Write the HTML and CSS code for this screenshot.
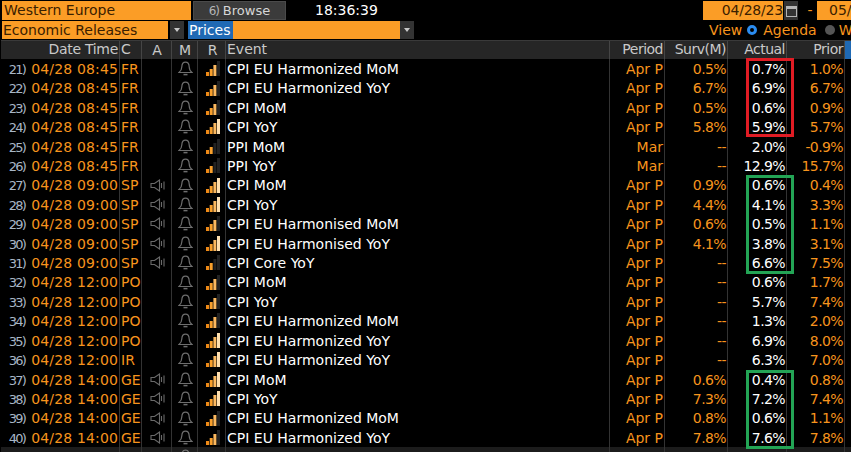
FILE: index.html
```html
<!DOCTYPE html>
<html lang="en">
<head>
<meta charset="utf-8">
<title>Economic Releases</title>
<link rel="stylesheet" href="styles.css">
</head>
<body>
<svg class="defs" width="0" height="0" aria-hidden="true">
  <symbol id="bell" viewBox="0 0 15 15"><path d="M1 11.5 C3.2 10 3.7 8.5 3.8 6 C3.9 3 5.2 1.2 7.5 1.2 C9.8 1.2 11.1 3 11.2 6 C11.3 8.5 11.8 10 14 11.5 Z" fill="none" stroke="#6e6e6e" stroke-width="1.2"/><path d="M5.5 13.6 H9.5" stroke="#6e6e6e" stroke-width="1.5"/></symbol>
  <symbol id="spk" viewBox="0 0 15 13"><path d="M1 4.5 H4.5 L9.5 1 V12 L4.5 8.5 H1 Z" fill="none" stroke="#6a6a6a" stroke-width="1.1"/><path d="M11.5 4 V9 M14 2.5 V10.5" stroke="#6a6a6a" stroke-width="1.1"/></symbol>
  <symbol id="sig2" viewBox="0 0 14 15"><rect y="11" width="3" height="4" fill="#ef8a17"/><rect x="3.7" y="8" width="3" height="7" fill="#f9a02c"/><rect x="7.4" y="4" width="3" height="11" fill="#222"/><rect x="11" width="3" height="15" fill="#222"/></symbol>
  <symbol id="sig3" viewBox="0 0 14 15"><rect y="11" width="3" height="4" fill="#ef8a17"/><rect x="3.7" y="8" width="3" height="7" fill="#f9a02c"/><rect x="7.4" y="4" width="3" height="11" fill="#fbb85f"/><rect x="11" width="3" height="15" fill="#222"/></symbol>
  <symbol id="sig4" viewBox="0 0 14 15"><rect y="11" width="3" height="4" fill="#ef8a17"/><rect x="3.7" y="8" width="3" height="7" fill="#f9a02c"/><rect x="7.4" y="4" width="3" height="11" fill="#fbb85f"/><rect x="11" width="3" height="15" fill="#ffdfae"/></symbol>
</svg>

<div class="bar bar-one">
  <div class="field field-region">Western Europe</div>
  <button class="browse"><span class="hot">6)</span> Browse</button>
  <div class="clock">18:36:39</div>
  <div class="dates">
    <div class="field field-date">04/28/23</div>
    <div class="cal"><svg width="11" height="12" viewBox="0 0 11 12"><rect x="0.5" y="1.5" width="10" height="10" fill="none" stroke="#b4b4b4"/><rect x="1" y="1" width="9" height="3" fill="#b4b4b4"/></svg></div>
    <span class="dash">-</span>
    <div class="field field-date2">05/</div>
  </div>
</div>
<div class="bar bar-two">
  <div class="field field-release">Economic Releases</div>
  <div class="arrow"></div>
  <div class="field field-prices"><span class="selected">Prices</span></div>
  <div class="arrow"></div>
  <div class="views">
    <span>View</span><i class="radio radio-on"></i><span>Agenda</span><i class="radio radio-off"></i><span>We</span>
  </div>
</div>

<div class="table">
  <div class="row head"><div class="c-num"></div><div class="c-date">Date Time</div><div class="c-c">C</div><div class="c-a">A</div><div class="c-m">M</div><div class="c-r">R</div><div class="c-ev">Event</div><div class="c-per">Period</div><div class="c-sur">Surv(M)</div><div class="c-act">Actual</div><div class="c-pri">Prior</div><div class="c-end"></div></div>

  <div class="row"><div class="c-num">21)</div><div class="c-date">04/28 08:45</div><div class="c-c">FR</div><div class="c-a"></div><div class="c-m"><svg class="bell"><use href="#bell"/></svg></div><div class="c-r"><svg class="sig"><use href="#sig3"/></svg></div><div class="c-ev">CPI EU Harmonized MoM</div><div class="c-per">Apr P</div><div class="c-sur">0.5%</div><div class="c-act">0.7%</div><div class="c-pri">1.0%</div><div class="c-end"></div></div>
  <div class="row"><div class="c-num">22)</div><div class="c-date">04/28 08:45</div><div class="c-c">FR</div><div class="c-a"></div><div class="c-m"><svg class="bell"><use href="#bell"/></svg></div><div class="c-r"><svg class="sig"><use href="#sig3"/></svg></div><div class="c-ev">CPI EU Harmonized YoY</div><div class="c-per">Apr P</div><div class="c-sur">6.7%</div><div class="c-act">6.9%</div><div class="c-pri">6.7%</div><div class="c-end"></div></div>
  <div class="row"><div class="c-num">23)</div><div class="c-date">04/28 08:45</div><div class="c-c">FR</div><div class="c-a"></div><div class="c-m"><svg class="bell"><use href="#bell"/></svg></div><div class="c-r"><svg class="sig"><use href="#sig3"/></svg></div><div class="c-ev">CPI MoM</div><div class="c-per">Apr P</div><div class="c-sur">0.5%</div><div class="c-act">0.6%</div><div class="c-pri">0.9%</div><div class="c-end"></div></div>
  <div class="row"><div class="c-num">24)</div><div class="c-date">04/28 08:45</div><div class="c-c">FR</div><div class="c-a"></div><div class="c-m"><svg class="bell"><use href="#bell"/></svg></div><div class="c-r"><svg class="sig"><use href="#sig4"/></svg></div><div class="c-ev">CPI YoY</div><div class="c-per">Apr P</div><div class="c-sur">5.8%</div><div class="c-act">5.9%</div><div class="c-pri">5.7%</div><div class="c-end"></div></div>
  <div class="row"><div class="c-num">25)</div><div class="c-date">04/28 08:45</div><div class="c-c">FR</div><div class="c-a"></div><div class="c-m"><svg class="bell"><use href="#bell"/></svg></div><div class="c-r"><svg class="sig"><use href="#sig2"/></svg></div><div class="c-ev">PPI MoM</div><div class="c-per">Mar</div><div class="c-sur">--</div><div class="c-act">2.0%</div><div class="c-pri">-0.9%</div><div class="c-end"></div></div>
  <div class="row"><div class="c-num">26)</div><div class="c-date">04/28 08:45</div><div class="c-c">FR</div><div class="c-a"></div><div class="c-m"><svg class="bell"><use href="#bell"/></svg></div><div class="c-r"><svg class="sig"><use href="#sig2"/></svg></div><div class="c-ev">PPI YoY</div><div class="c-per">Mar</div><div class="c-sur">--</div><div class="c-act">12.9%</div><div class="c-pri">15.7%</div><div class="c-end"></div></div>
  <div class="row"><div class="c-num">27)</div><div class="c-date">04/28 09:00</div><div class="c-c">SP</div><div class="c-a"><svg class="spk"><use href="#spk"/></svg></div><div class="c-m"><svg class="bell"><use href="#bell"/></svg></div><div class="c-r"><svg class="sig"><use href="#sig4"/></svg></div><div class="c-ev">CPI MoM</div><div class="c-per">Apr P</div><div class="c-sur">0.9%</div><div class="c-act">0.6%</div><div class="c-pri">0.4%</div><div class="c-end"></div></div>
  <div class="row"><div class="c-num">28)</div><div class="c-date">04/28 09:00</div><div class="c-c">SP</div><div class="c-a"><svg class="spk"><use href="#spk"/></svg></div><div class="c-m"><svg class="bell"><use href="#bell"/></svg></div><div class="c-r"><svg class="sig"><use href="#sig4"/></svg></div><div class="c-ev">CPI YoY</div><div class="c-per">Apr P</div><div class="c-sur">4.4%</div><div class="c-act">4.1%</div><div class="c-pri">3.3%</div><div class="c-end"></div></div>
  <div class="row"><div class="c-num">29)</div><div class="c-date">04/28 09:00</div><div class="c-c">SP</div><div class="c-a"><svg class="spk"><use href="#spk"/></svg></div><div class="c-m"><svg class="bell"><use href="#bell"/></svg></div><div class="c-r"><svg class="sig"><use href="#sig3"/></svg></div><div class="c-ev">CPI EU Harmonised MoM</div><div class="c-per">Apr P</div><div class="c-sur">0.6%</div><div class="c-act">0.5%</div><div class="c-pri">1.1%</div><div class="c-end"></div></div>
  <div class="row"><div class="c-num">30)</div><div class="c-date">04/28 09:00</div><div class="c-c">SP</div><div class="c-a"><svg class="spk"><use href="#spk"/></svg></div><div class="c-m"><svg class="bell"><use href="#bell"/></svg></div><div class="c-r"><svg class="sig"><use href="#sig4"/></svg></div><div class="c-ev">CPI EU Harmonised YoY</div><div class="c-per">Apr P</div><div class="c-sur">4.1%</div><div class="c-act">3.8%</div><div class="c-pri">3.1%</div><div class="c-end"></div></div>
  <div class="row"><div class="c-num">31)</div><div class="c-date">04/28 09:00</div><div class="c-c">SP</div><div class="c-a"><svg class="spk"><use href="#spk"/></svg></div><div class="c-m"><svg class="bell"><use href="#bell"/></svg></div><div class="c-r"><svg class="sig"><use href="#sig2"/></svg></div><div class="c-ev">CPI Core YoY</div><div class="c-per">Apr P</div><div class="c-sur">--</div><div class="c-act">6.6%</div><div class="c-pri">7.5%</div><div class="c-end"></div></div>
  <div class="row"><div class="c-num">32)</div><div class="c-date">04/28 12:00</div><div class="c-c">PO</div><div class="c-a"></div><div class="c-m"><svg class="bell"><use href="#bell"/></svg></div><div class="c-r"><svg class="sig"><use href="#sig3"/></svg></div><div class="c-ev">CPI MoM</div><div class="c-per">Apr P</div><div class="c-sur">--</div><div class="c-act">0.6%</div><div class="c-pri">1.7%</div><div class="c-end"></div></div>
  <div class="row"><div class="c-num">33)</div><div class="c-date">04/28 12:00</div><div class="c-c">PO</div><div class="c-a"></div><div class="c-m"><svg class="bell"><use href="#bell"/></svg></div><div class="c-r"><svg class="sig"><use href="#sig3"/></svg></div><div class="c-ev">CPI YoY</div><div class="c-per">Apr P</div><div class="c-sur">--</div><div class="c-act">5.7%</div><div class="c-pri">7.4%</div><div class="c-end"></div></div>
  <div class="row"><div class="c-num">34)</div><div class="c-date">04/28 12:00</div><div class="c-c">PO</div><div class="c-a"></div><div class="c-m"><svg class="bell"><use href="#bell"/></svg></div><div class="c-r"><svg class="sig"><use href="#sig3"/></svg></div><div class="c-ev">CPI EU Harmonized MoM</div><div class="c-per">Apr P</div><div class="c-sur">--</div><div class="c-act">1.3%</div><div class="c-pri">2.0%</div><div class="c-end"></div></div>
  <div class="row"><div class="c-num">35)</div><div class="c-date">04/28 12:00</div><div class="c-c">PO</div><div class="c-a"></div><div class="c-m"><svg class="bell"><use href="#bell"/></svg></div><div class="c-r"><svg class="sig"><use href="#sig4"/></svg></div><div class="c-ev">CPI EU Harmonized YoY</div><div class="c-per">Apr P</div><div class="c-sur">--</div><div class="c-act">6.9%</div><div class="c-pri">8.0%</div><div class="c-end"></div></div>
  <div class="row"><div class="c-num">36)</div><div class="c-date">04/28 12:00</div><div class="c-c">IR</div><div class="c-a"></div><div class="c-m"><svg class="bell"><use href="#bell"/></svg></div><div class="c-r"><svg class="sig"><use href="#sig4"/></svg></div><div class="c-ev">CPI EU Harmonized YoY</div><div class="c-per">Apr P</div><div class="c-sur">--</div><div class="c-act">6.3%</div><div class="c-pri">7.0%</div><div class="c-end"></div></div>
  <div class="row"><div class="c-num">37)</div><div class="c-date">04/28 14:00</div><div class="c-c">GE</div><div class="c-a"><svg class="spk"><use href="#spk"/></svg></div><div class="c-m"><svg class="bell"><use href="#bell"/></svg></div><div class="c-r"><svg class="sig"><use href="#sig4"/></svg></div><div class="c-ev">CPI MoM</div><div class="c-per">Apr P</div><div class="c-sur">0.6%</div><div class="c-act">0.4%</div><div class="c-pri">0.8%</div><div class="c-end"></div></div>
  <div class="row"><div class="c-num">38)</div><div class="c-date">04/28 14:00</div><div class="c-c">GE</div><div class="c-a"><svg class="spk"><use href="#spk"/></svg></div><div class="c-m"><svg class="bell"><use href="#bell"/></svg></div><div class="c-r"><svg class="sig"><use href="#sig4"/></svg></div><div class="c-ev">CPI YoY</div><div class="c-per">Apr P</div><div class="c-sur">7.3%</div><div class="c-act">7.2%</div><div class="c-pri">7.4%</div><div class="c-end"></div></div>
  <div class="row"><div class="c-num">39)</div><div class="c-date">04/28 14:00</div><div class="c-c">GE</div><div class="c-a"><svg class="spk"><use href="#spk"/></svg></div><div class="c-m"><svg class="bell"><use href="#bell"/></svg></div><div class="c-r"><svg class="sig"><use href="#sig3"/></svg></div><div class="c-ev">CPI EU Harmonized MoM</div><div class="c-per">Apr P</div><div class="c-sur">0.8%</div><div class="c-act">0.6%</div><div class="c-pri">1.1%</div><div class="c-end"></div></div>
  <div class="row"><div class="c-num">40)</div><div class="c-date">04/28 14:00</div><div class="c-c">GE</div><div class="c-a"><svg class="spk"><use href="#spk"/></svg></div><div class="c-m"><svg class="bell"><use href="#bell"/></svg></div><div class="c-r"><svg class="sig"><use href="#sig3"/></svg></div><div class="c-ev">CPI EU Harmonized YoY</div><div class="c-per">Apr P</div><div class="c-sur">7.8%</div><div class="c-act">7.6%</div><div class="c-pri">7.8%</div><div class="c-end"></div></div>
  <div class="row row-cut"><div class="c-num"></div><div class="c-date"></div><div class="c-c"></div><div class="c-a"></div><div class="c-m"><svg class="bell"><use href="#bell"/></svg></div><div class="c-r"></div><div class="c-ev"></div><div class="c-per"></div><div class="c-sur"></div><div class="c-act"></div><div class="c-pri"></div><div class="c-end"></div></div>
</div>

<div class="mark mark-red"></div>
<div class="mark mark-green-a"></div>
<div class="mark mark-green-b"></div>
</body>
</html>
```
FILE: styles.css
```css
* { box-sizing: border-box; }
html, body { margin: 0; height: 452px; overflow: hidden; background: #000; }
body {
  position: relative;
  width: 851px;
  font-family: "DejaVu Sans", sans-serif;
  font-size: 14px;
  line-height: 18px;
  color: #f7941d;
}
.defs { position: absolute; }

.bar { display: flex; align-items: stretch; padding-left: 2px; overflow: hidden; }
.bar-one { height: 19px; margin-top: 1px; }
.bar-two { height: 18px; margin-top: 1px; }

.field { background: #fb9d26; color: #3a2000; padding-left: 2px; white-space: nowrap; overflow: hidden; flex: none; }
.field-region { width: 189px; }
.browse {
  width: 93px; margin-left: 2px; padding: 0;
  font: inherit; font-size: 13px; color: #d6d6d6;
  background: #3b3b3b; border: 1px solid #4a4a4a;
}
.hot { font-size: 12px; letter-spacing: -1.2px; color: #b5b5b5; }
.clock { margin-left: 29px; color: #fff; }
.dates { display: flex; margin-left: auto; width: 148px; flex: none; }
.field-date { width: 80px; text-align: right; padding-right: 0; letter-spacing: -0.2px; }
.field-date2 { width: 34px; padding-left: 12px; }
.cal { width: 14px; margin-left: 1px; background: #333; display: flex; align-items: center; justify-content: center; flex: none; }
.dash { width: 14px; margin-left: 5px; flex: none; text-align: center; }

.field-release { width: 166px; padding-left: 1px; }
.field-prices { width: 212px; padding-left: 0; color: #fff; margin-left: 4px; }
.selected { display: inline-block; background: #1f69b4; padding-left: 1px; width: 45px; }
.arrow { width: 14px; margin-left: 2px; background: #333; position: relative; flex: none; }
.field-prices + .arrow { margin-left: 0; }
.arrow::after {
  content: ""; position: absolute; left: 4px; top: 7px;
  border-left: 3px solid transparent; border-right: 3px solid transparent; border-top: 4px solid #c8c8c8;
}
.views { display: flex; align-items: center; margin-left: auto; width: 142px; flex: none; }
.views span { flex: none; }
.radio { width: 10px; height: 10px; border-radius: 50%; flex: none; }
.radio-on { border: 3px solid #2b8cf0; margin: 0 6px 0 5px; }
.radio-off { background: #555; margin: 0 4px 0 8px; }

.table { margin-top: 1px; padding-left: 1px; }
.row {
  display: grid;
  grid-template-columns: 29px 90px 22px 30px 26px 28px 384px 55px 63px 59px 58px 6px;
  height: 19.42px;
  line-height: 21px;
  white-space: nowrap;
}
.row > div { border-right: 1px solid #333; overflow: hidden; }
.row > .c-num, .row > .c-end { border-right: 0; }
.head { height: 19px; background: #262626; color: #c9c9c9; border-top: 1px solid #3a3a3a; line-height: 17px; }
.head > div { border-right-color: #454545; }
.c-num { font-size: 13px; letter-spacing: -1.8px; color: #a8b6c6; text-align: right; padding-right: 5px; }
.c-date { text-align: right; padding-right: 1px; letter-spacing: 0.15px; }
.c-per { text-align: right; padding-right: 1px; }
.c-sur, .c-act, .c-pri { text-align: right; padding-right: 1px; letter-spacing: -0.6px; }
.c-c { padding-left: 1px; }
.c-a, .c-m, .c-r { display: flex; align-items: center; justify-content: center; padding-left: 1px; }
.c-r { padding-left: 2px; }
.c-ev { color: #fff; padding-left: 1px; }
.c-act { color: #fff; }
.head .c-date { letter-spacing: -0.3px; }
.head .c-per { letter-spacing: -0.5px; }
.head .c-sur { letter-spacing: -0.5px; }
.head .c-act { letter-spacing: -0.5px; color: #c9c9c9; }
.head .c-pri { letter-spacing: -0.5px; }
.head .c-ev { color: #c9c9c9; }
.head .c-end { background: #1f69b4; }
.bell { width: 15px; height: 15px; display: block; }
.spk { width: 15px; height: 13px; display: block; }
.sig { width: 14px; height: 15px; display: block; }
.row-cut { background: #1c1c1c; }

.mark { position: absolute; left: 746px; width: 48px; border: 3px solid #23a455; pointer-events: none; }
.mark-red { top: 58px; height: 79px; border-color: #e01c24; }
.mark-green-a { top: 175px; height: 99px; }
.mark-green-b { top: 370px; height: 79px; }
```
